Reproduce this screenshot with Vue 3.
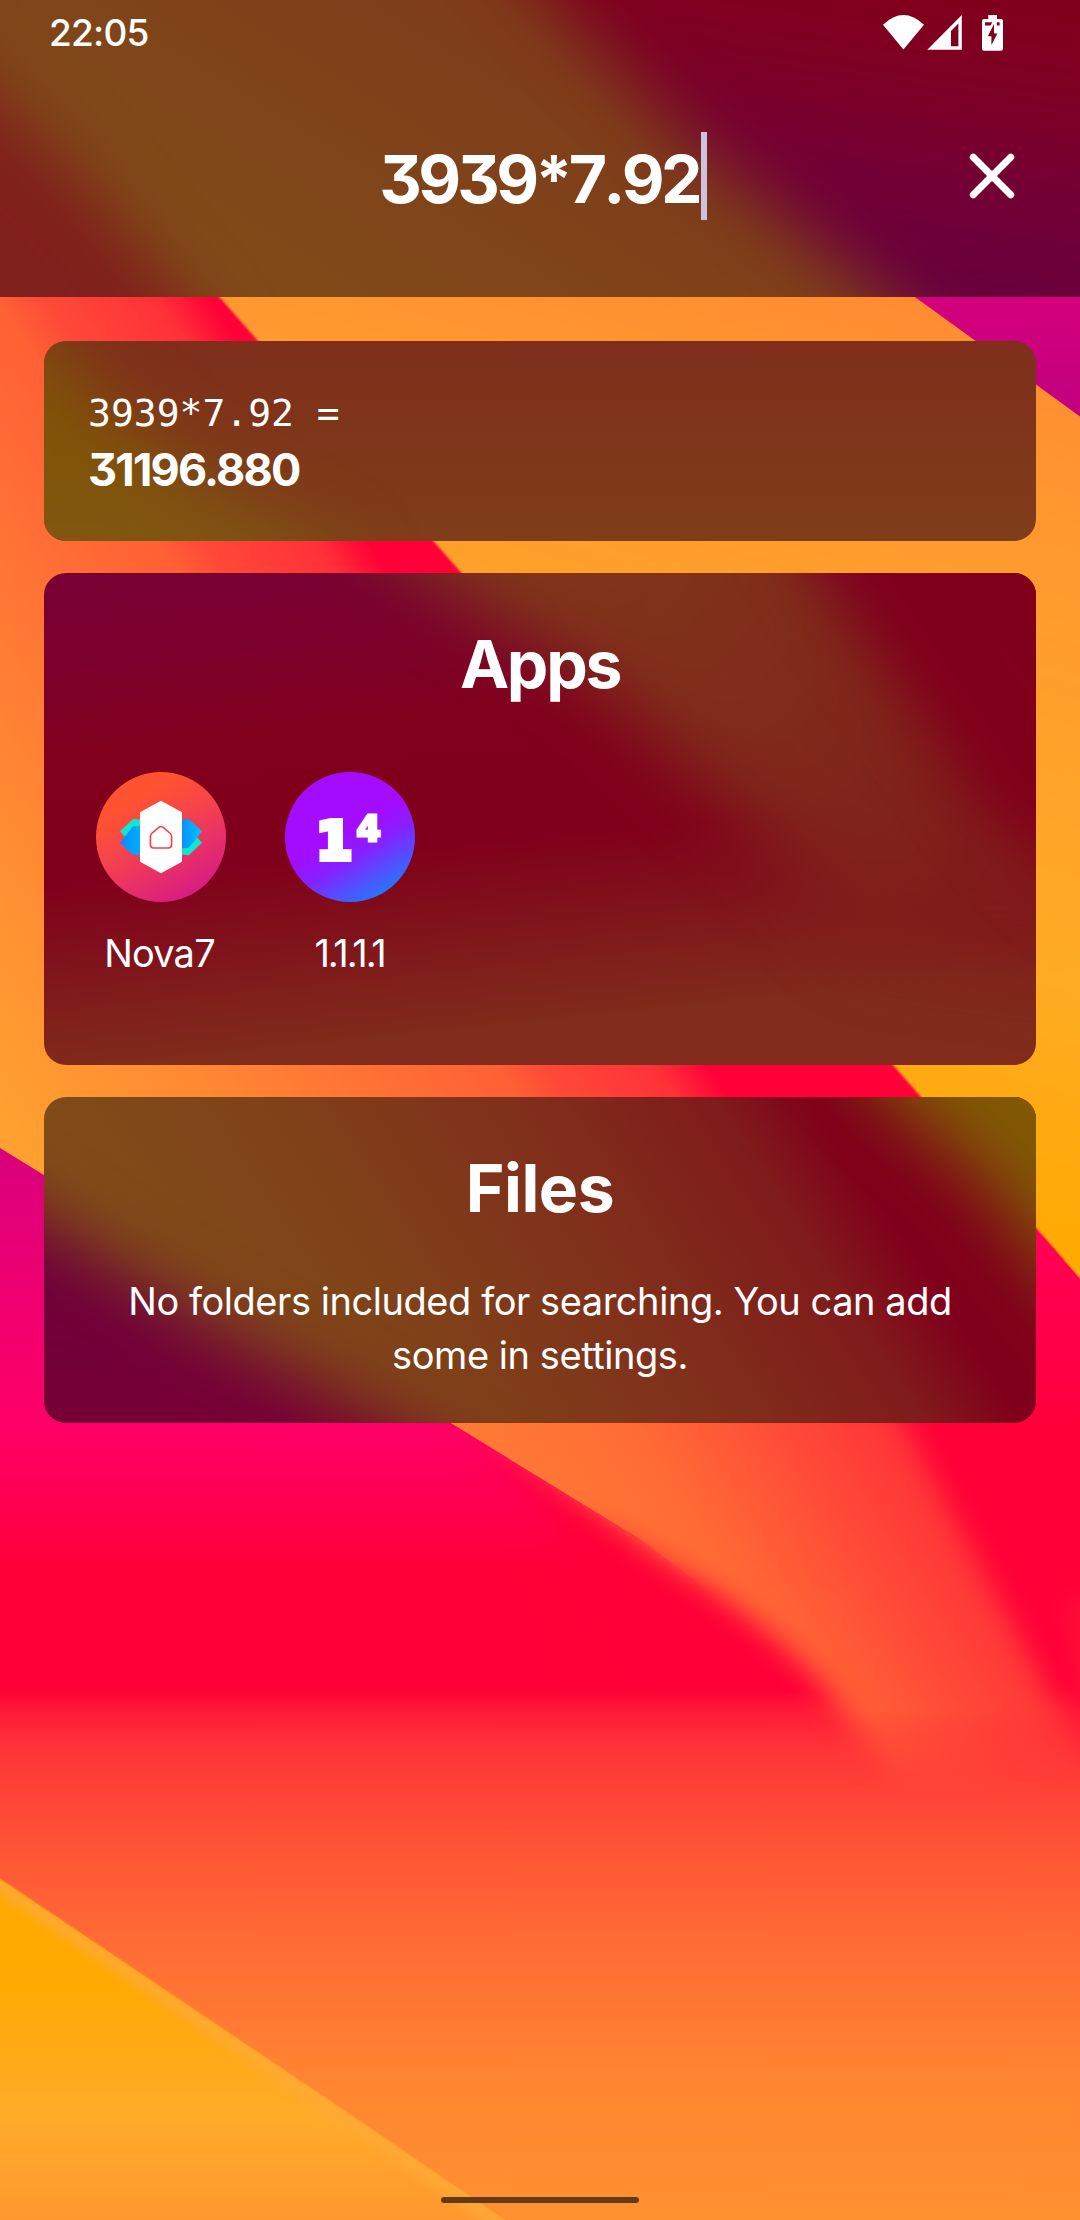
<script setup>
const query = '3939*7.92'
const result = '31196.880'
</script>

<template>
  <div class="screen">
    <svg class="wallpaper" viewBox="0 0 1080 2220" aria-hidden="true">
      <defs>
        <linearGradient id="wBand" gradientUnits="userSpaceOnUse" x1="-506" y1="329" x2="28" y2="-18">
          <stop offset="0" stop-color="#ffa030" />
          <stop offset=".29" stop-color="#ff8833" />
          <stop offset=".47" stop-color="#ff7535" />
          <stop offset=".69" stop-color="#ff6035" />
          <stop offset=".75" stop-color="#ff4a38" />
          <stop offset=".9" stop-color="#ff3038" />
          <stop offset=".97" stop-color="#ff0038" />
        </linearGradient>
        <linearGradient id="wGold" gradientUnits="userSpaceOnUse" x1="1000" y1="300" x2="760" y2="1180">
          <stop offset="0" stop-color="#ff8a32" />
          <stop offset=".25" stop-color="#ff9a2f" />
          <stop offset=".7" stop-color="#ffab24" />
          <stop offset="1" stop-color="#ffaa00" />
        </linearGradient>
        <linearGradient id="wMagenta" x1="0" y1="0" x2="0" y2="1">
          <stop offset="0" stop-color="#d6007c" />
          <stop offset="1" stop-color="#c0007f" />
        </linearGradient>
        <linearGradient id="wPink" gradientUnits="userSpaceOnUse" x1="0" y1="1148" x2="0" y2="1720">
          <stop offset="0" stop-color="#d8007c" />
          <stop offset=".27" stop-color="#f00070" />
          <stop offset=".5" stop-color="#ff0066" />
          <stop offset=".6" stop-color="#ff0055" />
          <stop offset=".74" stop-color="#ff0038" />
        </linearGradient>
        <linearGradient id="wFloor" gradientUnits="userSpaceOnUse" x1="0" y1="1690" x2="0" y2="2220">
          <stop offset="0" stop-color="#ff0038" />
          <stop offset=".04" stop-color="#ff1b38" />
          <stop offset=".11" stop-color="#ff3438" />
          <stop offset=".3" stop-color="#ff5536" />
          <stop offset=".48" stop-color="#ff6c35" />
          <stop offset=".62" stop-color="#ff7933" />
          <stop offset=".75" stop-color="#ff8631" />
          <stop offset="1" stop-color="#ff9130" />
        </linearGradient>
        <linearGradient id="wStreak" gradientUnits="userSpaceOnUse" x1="460" y1="1423" x2="771" y2="1230">
          <stop offset="0" stop-color="#ff7b34" />
          <stop offset=".4" stop-color="#ff6b35" />
          <stop offset=".75" stop-color="#ff4a38" />
          <stop offset="1" stop-color="#ff3438" />
        </linearGradient>
        <linearGradient id="wCorner" gradientUnits="userSpaceOnUse" x1="0" y1="1880" x2="0" y2="2220">
          <stop offset="0" stop-color="#ffaa00" />
          <stop offset=".3" stop-color="#ffaa02" />
          <stop offset=".7" stop-color="#ffab2a" />
          <stop offset="1" stop-color="#ff982f" />
        </linearGradient>
        <linearGradient id="wRose" x1="0" y1="0" x2="0" y2="1">
          <stop offset="0" stop-color="#ff0058" />
          <stop offset="1" stop-color="#ff0038" />
        </linearGradient>
        <linearGradient id="wFade" gradientUnits="userSpaceOnUse" x1="0" y1="1710" x2="0" y2="1800">
          <stop offset="0" stop-color="#fff" />
          <stop offset="1" stop-color="#000" />
        </linearGradient>
        <mask id="wStreakMask" maskUnits="userSpaceOnUse" x="0" y="1300" width="1080" height="600">
          <rect y="1300" width="1080" height="600" fill="url(#wFade)" />
        </mask>
        <linearGradient id="wFadeSharp" gradientUnits="userSpaceOnUse" x1="0" y1="1500" x2="0" y2="1590">
          <stop offset="0" stop-color="#fff" />
          <stop offset="1" stop-color="#000" />
        </linearGradient>
        <mask id="wSharpMask" maskUnits="userSpaceOnUse" x="0" y="1300" width="1080" height="600">
          <rect y="1300" width="1080" height="600" fill="url(#wFadeSharp)" />
        </mask>
        <filter id="b2" x="-10%" y="-10%" width="120%" height="120%"><feGaussianBlur stdDeviation="1.2" /></filter>
        <filter id="b5" x="-20%" y="-20%" width="140%" height="140%"><feGaussianBlur stdDeviation="5" /></filter>
        <filter id="b12" x="-20%" y="-20%" width="140%" height="140%"><feGaussianBlur stdDeviation="14" /></filter>
        <filter id="b25" x="-30%" y="-30%" width="160%" height="160%"><feGaussianBlur stdDeviation="22" /></filter>
        <clipPath id="cornerClip"><path d="M0 1879L330 2101L505 2220H0Z" /></clipPath>
      </defs>
      <rect width="1080" height="1260" fill="url(#wBand)" />
      <path d="M215 292L893 1065L1085 1284V292Z" fill="url(#wGold)" filter="url(#b2)" />
      <path d="M908 292L1085 420V292Z" fill="url(#wMagenta)" />
      <path d="M1036 1229L1080 1279V1450H1000V1229Z" fill="url(#wRose)" />
      <path d="M0 1148L600 1517V1800H0Z" fill="url(#wPink)" />
      <path d="M440 1423H1080V1710H0V1620H440Z" fill="#ff0038" />
      <path d="M0 1423H449L610 1517L750 1620V1720H0Z" fill="url(#wPink)" />
      <path d="M455 1405C520 1460 560 1520 590 1600L620 1720H860L760 1600L640 1530Z" fill="#ff0038" filter="url(#b25)" />
      <rect y="1690" width="1080" height="530" fill="url(#wFloor)" />
      <path d="M1065 1600L1130 1600V1790L1088 1750Z" fill="#ff1038" filter="url(#b12)" />
      <g mask="url(#wStreakMask)">
        <path d="M500 1435L660 1556C740 1606 800 1655 838 1705L900 1790L1060 1840L1078 1760L1042 1678L978 1560L893 1400H560Z" fill="url(#wStreak)" filter="url(#b12)" />
        <path d="M449 1422L640 1539L740 1614L850 1614L840 1422Z" fill="url(#wStreak)" mask="url(#wSharpMask)" />
      </g>
      <path d="M-30 1859L0 1879L330 2101L505 2220L540 2250H-30Z" fill="url(#wCorner)" filter="url(#b2)" />
      <g clip-path="url(#cornerClip)">
        <path d="M-20 1866L510 2224" stroke="#ffa938" stroke-width="26" opacity=".75" filter="url(#b5)" />
      </g>
    </svg>

    <header class="top">
      <svg class="glass" viewBox="0 0 1080 297" preserveAspectRatio="none" aria-hidden="true">
        <defs>
          <linearGradient id="hBase" gradientUnits="userSpaceOnUse" x1="480" y1="0" x2="300" y2="297">
            <stop offset="0" stop-color="#7f3c1a" />
            <stop offset="1" stop-color="#804a18" />
          </linearGradient>
          <linearGradient id="hWine" gradientUnits="userSpaceOnUse" x1="900" y1="0" x2="860" y2="297">
            <stop offset="0" stop-color="#80001b" />
            <stop offset=".25" stop-color="#7e0024" />
            <stop offset=".55" stop-color="#740034" />
            <stop offset="1" stop-color="#66003f" />
          </linearGradient>
          <filter id="hb" filterUnits="userSpaceOnUse" x="-200" y="-200" width="1500" height="700"><feGaussianBlur stdDeviation="32" /></filter>
        </defs>
        <rect width="1080" height="297" fill="url(#hBase)" />
        <path d="M450 -120L550 0L700 150L885 297L1000 400H1300V-120Z" fill="url(#hWine)" filter="url(#hb)" />
        <path d="M-150 -80L-50 50L75 170L180 297L250 400H-150Z" fill="#80201c" filter="url(#hb)" />
      </svg>
      <div class="status">
        <span class="clock">22:05</span>
        <svg class="tray" width="122" height="38" viewBox="882 14 122 38" aria-hidden="true">
          <path d="M883 24.7Q903.4 5.4 924 24.7L903.4 49.4Z" fill="#fff" />
          <path d="M927.3 49.8L961.8 15V49.8ZM951 30.9V46.2H958.4V23.4Z" fill="#fff" fill-rule="evenodd" />
          <path d="M988.3 19V15H997V19H1001Q1003 19 1003 21V48.7Q1003 50.7 1001 50.7H984Q982 50.7 982 48.7V21Q982 19 984 19Z" fill="#fff" />
          <path d="M985 22.3H992.2L990.6 25.6H985ZM996.8 22.3H999.6V25.6H996.8Z" fill="#80001f" />
          <path d="M994 24L987.8 36.2H991.4V45L997.4 33.4H994Z" fill="#80001f" />
        </svg>
      </div>
      <div class="search">
        <span class="query">{{ query }}</span><i class="caret"></i>
        <svg class="close" width="46" height="46" viewBox="0 0 46 46" aria-label="Clear">
          <path d="M4.3 4.3L41.7 41.7M41.7 4.3L4.3 41.7" stroke="#fff" stroke-width="7" stroke-linecap="round" />
        </svg>
      </div>
    </header>

    <main class="results">
      <section class="card calc">
        <svg class="glass" viewBox="0 0 992 200" preserveAspectRatio="none" aria-hidden="true">
          <defs>
            <linearGradient id="cBase" x1="0" y1="0" x2="0" y2="1">
              <stop offset="0" stop-color="#7f2e1b" />
              <stop offset="1" stop-color="#7f3e19" />
            </linearGradient>
            <linearGradient id="cOlive" gradientUnits="userSpaceOnUse" x1="0" y1="0" x2="0" y2="200">
              <stop offset="0" stop-color="#80500f" />
              <stop offset=".45" stop-color="#805604" />
              <stop offset="1" stop-color="#805613" />
            </linearGradient>
            <filter id="cb" filterUnits="userSpaceOnUse" x="-250" y="-200" width="1000" height="700"><feGaussianBlur stdDeviation="38" /></filter>
          </defs>
          <rect width="992" height="200" fill="url(#cBase)" />
          <path d="M-200 -60H-30L60 70L150 140L300 230V350H-200Z" fill="url(#cOlive)" filter="url(#cb)" />
        </svg>
        <p class="expression">{{ query }} =</p>
        <p class="answer">{{ result }}</p>
      </section>

      <section class="card apps">
        <svg class="glass" viewBox="0 0 992 492" preserveAspectRatio="none" aria-hidden="true">
          <defs>
            <linearGradient id="aBase" gradientUnits="userSpaceOnUse" x1="40" y1="0" x2="90" y2="492">
              <stop offset="0" stop-color="#780035" />
              <stop offset=".18" stop-color="#7c002c" />
              <stop offset=".36" stop-color="#80001d" />
              <stop offset=".62" stop-color="#80001b" />
              <stop offset=".76" stop-color="#80101b" />
              <stop offset=".89" stop-color="#80201b" />
              <stop offset="1" stop-color="#802b1b" />
            </linearGradient>
            <linearGradient id="aBand" gradientUnits="userSpaceOnUse" x1="440" y1="0" x2="900" y2="400">
              <stop offset="0" stop-color="#803818" />
              <stop offset=".45" stop-color="#802d1b" />
              <stop offset="1" stop-color="#801b1b" />
            </linearGradient>
            <filter id="ab" filterUnits="userSpaceOnUse" x="-200" y="-250" width="1500" height="1000"><feGaussianBlur stdDeviation="36" /></filter>
          </defs>
          <rect width="992" height="492" fill="url(#aBase)" />
          <path d="M210 -120L380 0L555 110L650 200L760 300L820 370L1200 420V340L980 260L900 140L800 0L730 -120Z" fill="url(#aBand)" filter="url(#ab)" />
          <path d="M710 -150L790 0L885 130L960 240L1070 340H1200V-150Z" fill="#80001b" filter="url(#ab)" />
        </svg>
        <h2 class="apps-title">Apps</h2>
        <ul class="grid">
          <li>
            <svg width="130" height="130" viewBox="0 0 130 130" aria-hidden="true">
              <defs>
                <linearGradient id="nova" x1=".25" y1=".1" x2=".75" y2=".95">
                  <stop offset=".12" stop-color="#ff5230" />
                  <stop offset=".4" stop-color="#f7454a" />
                  <stop offset="1" stop-color="#d81b84" />
                </linearGradient>
                <linearGradient id="novaL" x1="0" y1="0" x2="1" y2="0">
                  <stop offset="0" stop-color="#0a8cff" />
                  <stop offset="1" stop-color="#00b0ff" />
                </linearGradient>
                <linearGradient id="novaR" x1="0" y1="0" x2="1" y2="0">
                  <stop offset="0" stop-color="#0a8cff" />
                  <stop offset="1" stop-color="#00c3ff" />
                </linearGradient>
              </defs>
              <circle cx="65" cy="65" r="65" fill="url(#nova)" />
              <path d="M24 59.2L36.6 47.4Q37.2 47 38 47L46 48V60L30 66Z" fill="#12e6cc" />
              <path d="M24 70.8L36 55.4Q37 54.4 38.4 54.3L46 54V82L38 83.2Q37.2 83.2 36.6 82.7Z" fill="url(#novaL)" />
              <path d="M100 64L106 70.8L93.2 82.7Q92.6 83.2 91.8 83.2L84 82V72Z" fill="#12e6cc" />
              <path d="M84 48L91.8 47Q92.6 47 93.2 47.4L106 59.2L94 74.6Q93 75.8 91.6 76L84 76.5Z" fill="url(#novaR)" />
              <path d="M65 28.7L86 40.3V89.7L65 101.3L44 89.7V40.3Z" fill="#fff" />
              <path d="M62.7 55.4Q65 53.6 67.3 55.4L74.3 61.5Q75.6 62.8 75.6 64.5V72.8Q75.6 76 72.4 76H57.6Q54.4 76 54.4 72.8V64.5Q54.4 62.8 55.7 61.5Z" fill="none" stroke="#f04343" stroke-width="1.6" />
            </svg>
            <span>Nova7</span>
          </li>
          <li>
            <svg width="130" height="130" viewBox="0 0 130 130" aria-hidden="true">
              <defs>
                <linearGradient id="dns" x1=".3" y1=".1" x2=".8" y2=".95">
                  <stop offset=".4" stop-color="#a30cff" />
                  <stop offset=".6" stop-color="#8720ff" />
                  <stop offset="1" stop-color="#1f7dff" />
                </linearGradient>
              </defs>
              <circle cx="65" cy="65" r="65" fill="url(#dns)" />
              <text class="logo-digit" x="31.5" y="87" font-size="51" stroke-width="6">1</text>
              <text class="logo-digit" x="71.5" y="68.5" font-size="35" stroke-width="3">4</text>
            </svg>
            <span class="ones">1.1.1.1</span>
          </li>
        </ul>
      </section>

      <section class="card files">
        <svg class="glass" viewBox="0 0 992 326" preserveAspectRatio="none" aria-hidden="true">
          <defs>
            <linearGradient id="fBase" gradientUnits="userSpaceOnUse" x1="60" y1="120" x2="642" y2="-258">
              <stop offset="0" stop-color="#804c18" />
              <stop offset=".3" stop-color="#804119" />
              <stop offset=".62" stop-color="#802d1b" />
              <stop offset=".83" stop-color="#801b1b" />
              <stop offset=".95" stop-color="#80001b" />
            </linearGradient>
            <linearGradient id="fPlum" x1="0" y1="0" x2="0" y2="1">
              <stop offset="0" stop-color="#6c003a" />
              <stop offset=".5" stop-color="#70003a" />
              <stop offset="1" stop-color="#7c0030" />
            </linearGradient>
            <filter id="fb" filterUnits="userSpaceOnUse" x="-300" y="-250" width="1700" height="900"><feGaussianBlur stdDeviation="34" /></filter>
          </defs>
          <rect width="992" height="326" fill="url(#fBase)" />
          <path d="M-200 -10L0 125L160 225L360 335L510 430H-200Z" fill="url(#fPlum)" filter="url(#fb)" />
          <path d="M740 -120L845 0L940 85L1010 180L1150 340V-120Z" fill="#805804" filter="url(#fb)" />
        </svg>
        <h2>Files</h2>
        <p class="hint">No folders included for searching. You can add<br />some in settings.</p>
      </section>
    </main>
    <div class="pill"></div>
  </div>
</template>

<style>
body {
  margin: 0;
}
</style>

<style scoped>
.screen {
  position: relative;
  width: 1080px;
  height: 2220px;
  overflow: hidden;
  background: #ff4038;
  color: #fff;
  font-family: Inter, "Liberation Sans", sans-serif;
  font-feature-settings: "cv09";
}
filter {
  color-interpolation-filters: sRGB;
}
.wallpaper,
.glass {
  position: absolute;
  inset: 0;
  width: 100%;
  height: 100%;
  display: block;
}
.top {
  position: relative;
  height: 297px;
  overflow: hidden;
}
.status {
  position: relative;
  display: flex;
  justify-content: space-between;
  align-items: center;
  height: 66px;
  padding: 0 76px 0 49px;
}
.clock {
  font-size: 37px;
  font-weight: 550;
  letter-spacing: -0.8px;
  line-height: 44px;
  padding-bottom: 1px;
}
.search {
  position: relative;
  display: flex;
  justify-content: center;
  align-items: center;
  height: 220px;
}
.query {
  font-size: 66px;
  font-weight: 700;
  line-height: 88px;
  letter-spacing: -3.7px;
  font-kerning: none;
  margin-top: 5px;
  padding: 0 2px 0 8px;
}
.caret {
  width: 6px;
  height: 88px;
  margin-right: 2px;
  background: #cdc3de;
}
.close {
  position: absolute;
  right: 65px;
  top: 87px;
}
.results {
  position: relative;
  display: flex;
  flex-direction: column;
  gap: 32px;
  padding: 44px 44px 0;
}
.card {
  position: relative;
  box-sizing: border-box;
  border-radius: 22px;
  overflow: hidden;
}
.card > :not(.glass) {
  position: relative;
}
.calc {
  height: 200px;
  padding: 45px 45px 0 44px;
}
p,
h2,
ul {
  margin: 0;
  padding: 0;
}
.expression {
  font-family: "DejaVu Sans Mono", monospace;
  font-size: 38px;
  line-height: 54px;
  margin-bottom: 1px;
}
.answer {
  font-size: 45px;
  font-weight: 700;
  line-height: 58px;
  letter-spacing: -1.8px;
}
h2 {
  font-size: 66px;
  font-weight: 650;
  line-height: 90px;
  letter-spacing: -0.5px;
  text-align: center;
}
.apps-title {
  letter-spacing: -2.3px;
}
.apps {
  height: 492px;
  padding-top: 46px;
}
.grid {
  display: flex;
  gap: 59px;
  list-style: none;
  padding: 63px 52px 0;
}
.grid li {
  width: 130px;
  display: flex;
  flex-direction: column;
  align-items: center;
}
.grid span {
  margin-top: 26px;
  margin-right: 3px;
  font-size: 38px;
  font-weight: 380;
  line-height: 50px;
  letter-spacing: -0.8px;
}
.grid .ones {
  margin-right: 1px;
  letter-spacing: -2.1px;
}
.logo-digit {
  font-family: "DejaVu Sans", sans-serif;
  font-weight: 700;
  fill: #fff;
  stroke: #fff;
}
.files {
  height: 326px;
  padding-top: 46px;
}
.hint {
  margin-top: 41px;
  font-size: 38px;
  font-weight: 380;
  line-height: 54px;
  letter-spacing: -0.45px;
  text-align: center;
}
.pill {
  position: absolute;
  left: 441px;
  top: 2197px;
  width: 198px;
  height: 6px;
  border-radius: 3px;
  background: #633a15;
}
</style>
